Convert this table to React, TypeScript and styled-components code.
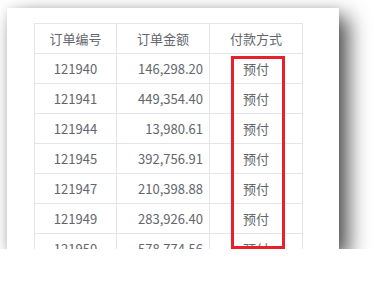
import React from 'react';
import styled, { createGlobalStyle } from 'styled-components';

const GlobalStyle = createGlobalStyle`
  html, body {
    margin: 0;
    background: #ffffff;
  }
  body {
    padding: 8px 0 0 7px;
    font-family: "Noto Sans CJK SC", "Noto Sans", sans-serif;
  }
`;

const Card = styled.div`
  position: relative;
  width: 332px;
  height: 241px;
  background: #ffffff;
  overflow: hidden;
  box-shadow: 9px 9px 20px rgba(0, 0, 0, 0.7), 0 0 8px rgba(0, 0, 0, 0.08);
  padding: 15px 0 0 27px;
  box-sizing: border-box;
`;

const Table = styled.table`
  border-collapse: collapse;
  table-layout: fixed;
  width: 269px;
  color: #63666c;
  font-size: 13px;
`;

const Th = styled.th`
  font-weight: normal;
  height: 29px;
  padding: 0 6px;
  border: 1px solid #e3e5ea;
  text-align: center;
`;

const Td = styled.td<{ $align?: 'left' | 'right' | 'center' }>`
  height: 29px;
  padding: 0 6px;
  border: 1px solid #e3e5ea;
  text-align: ${(p) => p.$align || 'center'};
`;

const Highlight = styled.div`
  position: absolute;
  left: 224px;
  top: 48px;
  width: 54px;
  height: 193px;
  border: 3px solid #e8202a;
  box-sizing: border-box;
`;

const orders = [
  { id: '121940', amount: '146,298.20' },
  { id: '121941', amount: '449,354.40' },
  { id: '121944', amount: '13,980.61' },
  { id: '121945', amount: '392,756.91' },
  { id: '121947', amount: '210,398.88' },
  { id: '121949', amount: '283,926.40' },
  { id: '121950', amount: '578,774.56' },
];

export default function App() {
  return (
    <>
      <GlobalStyle />
      <Card>
        <Table>
          <colgroup>
            <col style={{ width: 82 }} />
            <col style={{ width: 93 }} />
            <col style={{ width: 93 }} />
          </colgroup>
          <thead>
            <tr>
              <Th>订单编号</Th>
              <Th>订单金额</Th>
              <Th>付款方式</Th>
            </tr>
          </thead>
          <tbody>
            {orders.map((o) => (
              <tr key={o.id}>
                <Td>{o.id}</Td>
                <Td $align="right">{o.amount}</Td>
                <Td>预付</Td>
              </tr>
            ))}
          </tbody>
        </Table>
        <Highlight />
      </Card>
    </>
  );
}
